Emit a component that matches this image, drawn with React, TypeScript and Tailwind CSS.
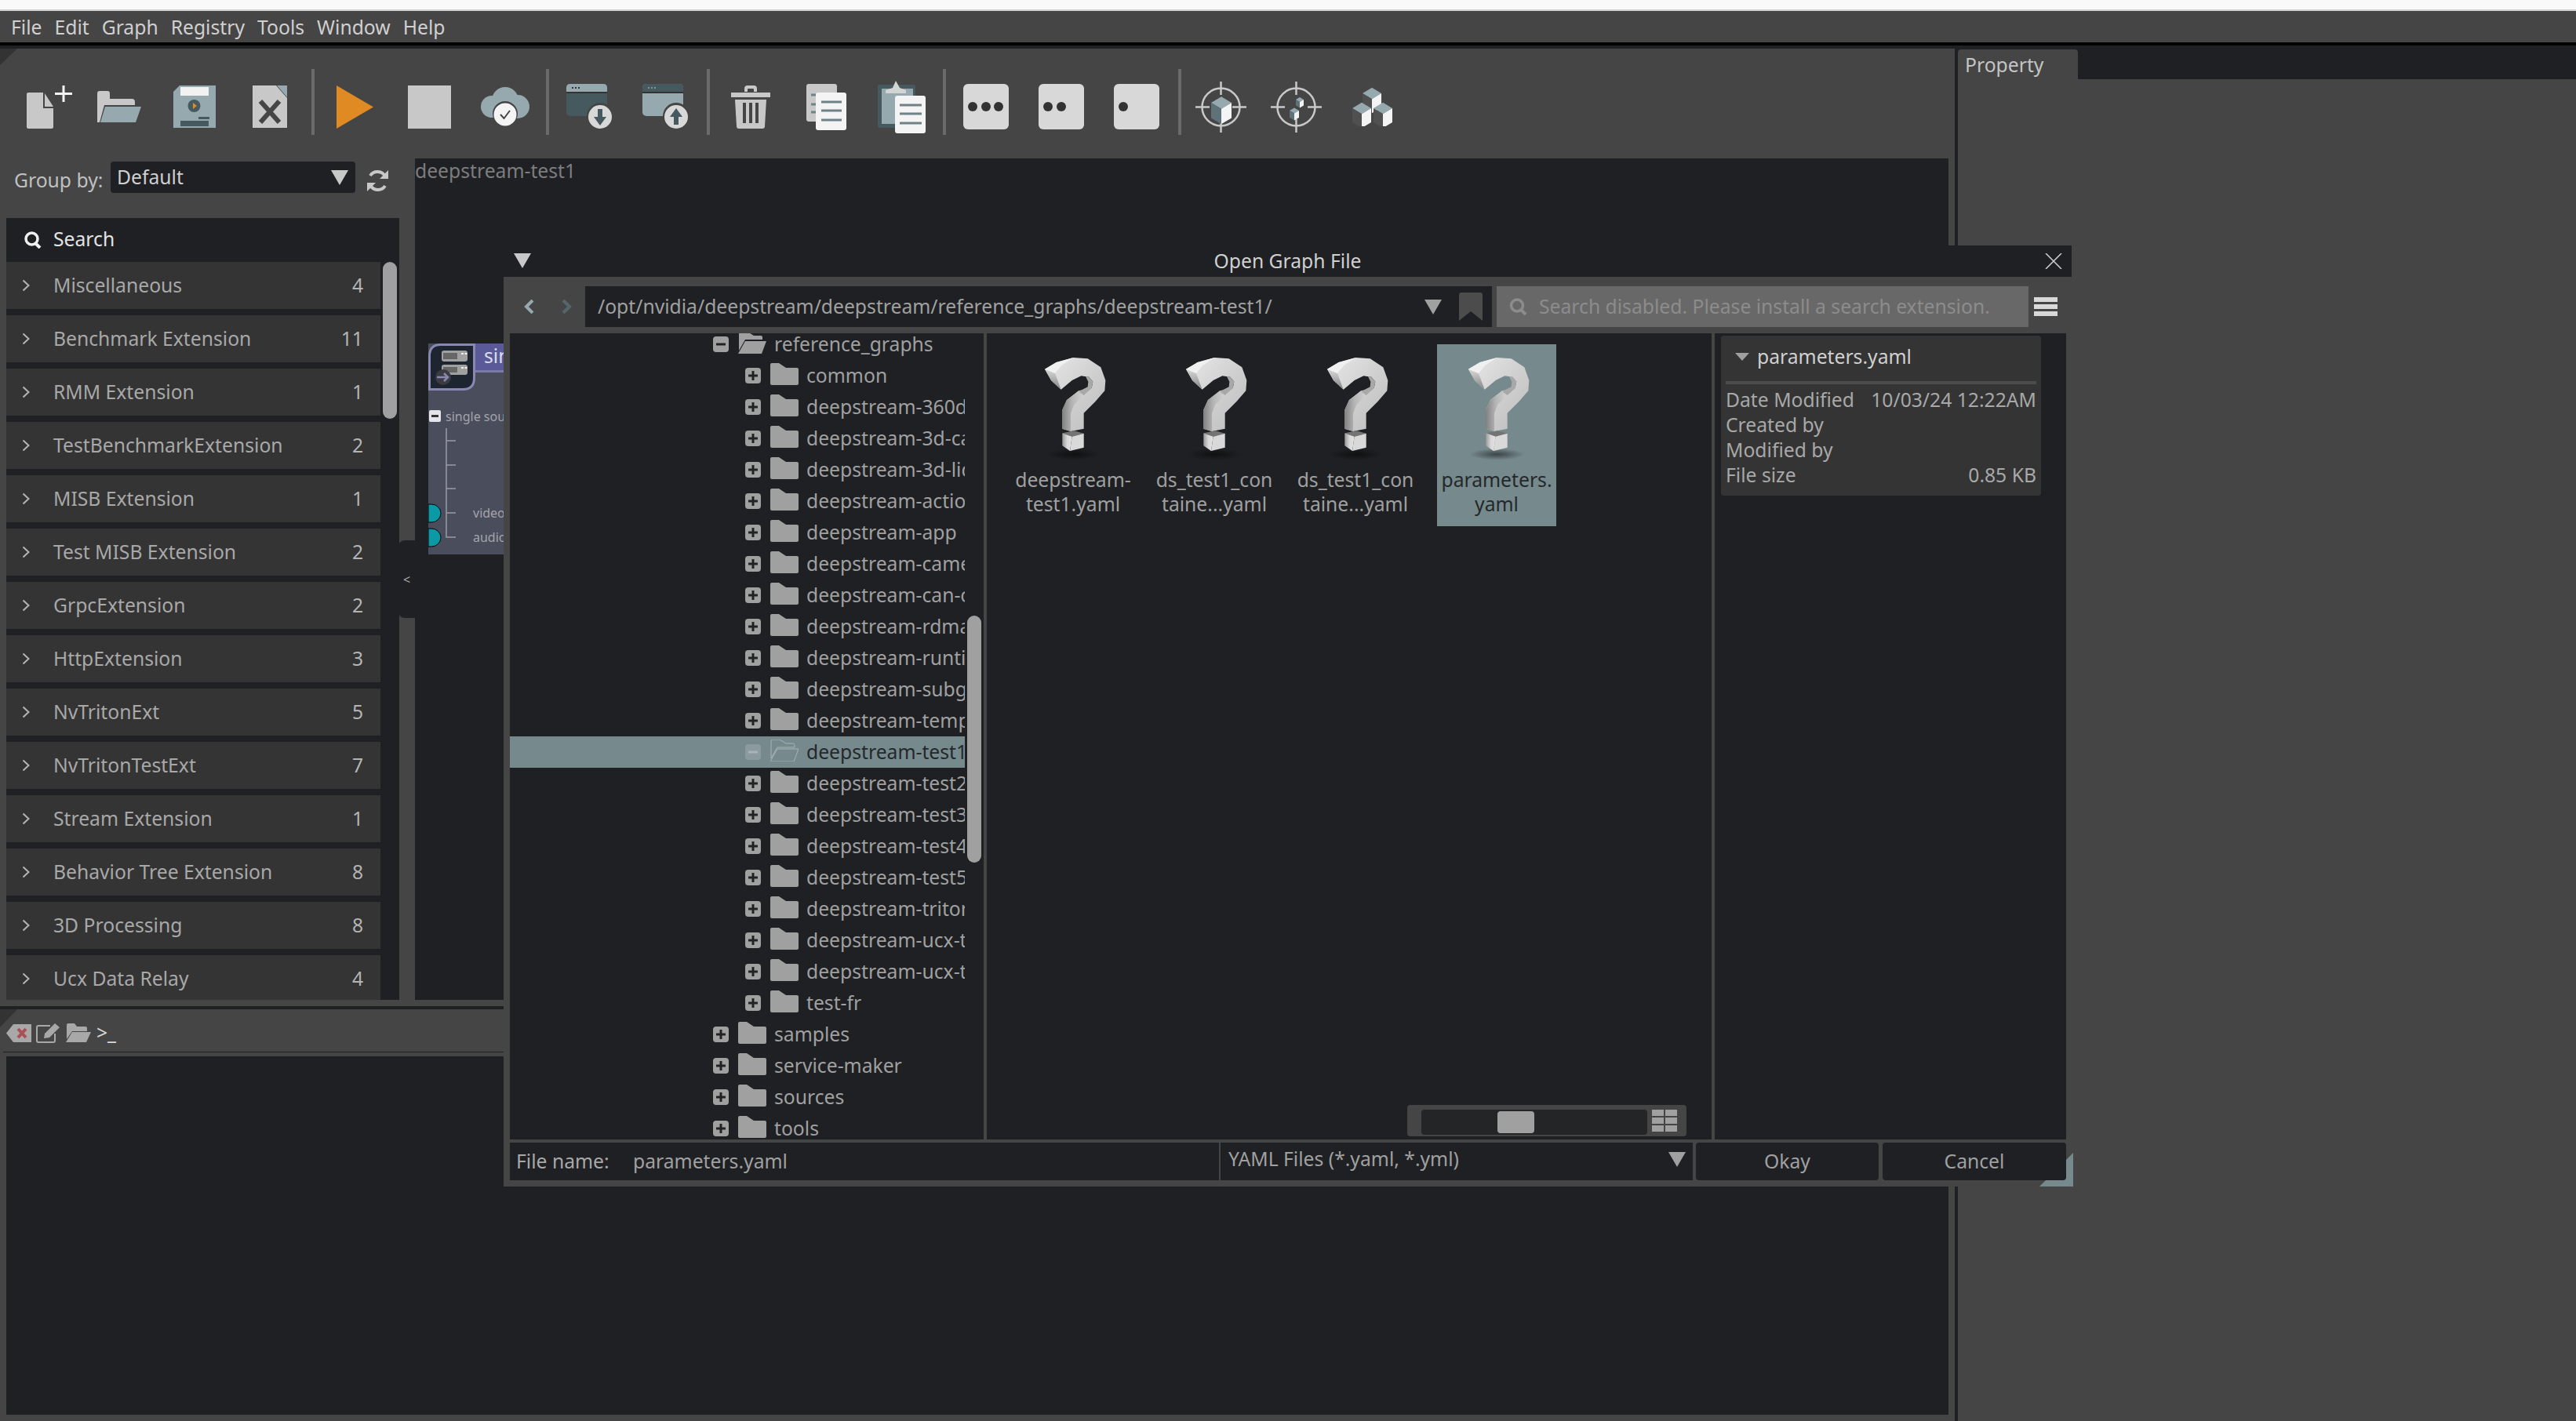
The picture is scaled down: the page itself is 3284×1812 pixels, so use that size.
const categories: [string, number][] = [
  ["Miscellaneous", 4],
  ["Benchmark Extension", 11],
  ["RMM Extension", 1],
  ["TestBenchmarkExtension", 2],
  ["MISB Extension", 1],
  ["Test MISB Extension", 2],
  ["GrpcExtension", 2],
  ["HttpExtension", 3],
  ["NvTritonExt", 5],
  ["NvTritonTestExt", 7],
  ["Stream Extension", 1],
  ["Behavior Tree Extension", 8],
  ["3D Processing", 8],
  ["Ucx Data Relay", 4],
];

const graphDirs = [
  "common",
  "deepstream-360d",
  "deepstream-3d-cam",
  "deepstream-3d-lid",
  "deepstream-action",
  "deepstream-app",
  "deepstream-camer",
  "deepstream-can-or",
  "deepstream-rdma-",
  "deepstream-runtim",
  "deepstream-subgra",
  "deepstream-templa",
  "deepstream-test1",
  "deepstream-test2",
  "deepstream-test3",
  "deepstream-test4",
  "deepstream-test5",
  "deepstream-triton",
  "deepstream-ucx-te",
  "deepstream-ucx-te",
  "test-fr",
];

const files = [
  ["deepstream-", "test1.yaml"],
  ["ds_test1_con", "taine...yaml"],
  ["ds_test1_con", "taine...yaml"],
  ["parameters.", "yaml"],
];

const Chevron = () => (
  <svg width="10" height="16" viewBox="0 0 10 16" className="shrink-0">
    <path d="M1.5 1.5 8.5 8l-7 6.5" fill="none" stroke="#b4b4b4" strokeWidth="2" />
  </svg>
);

const Tri = ({ className, fill = "#c8c8c8" }: { className?: string; fill?: string }) => (
  <svg width="22" height="19" viewBox="0 0 22 19" className={className}>
    <path d="M0 0h22L11 19z" fill={fill} />
  </svg>
);

const Sep = ({ className }: { className: string }) => (
  <div className={`w-1 h-[84px] mb-3 shrink-0 bg-[#6a6a6a] ${className}`} />
);

const Cube = ({ x, y, s, left = "#5e7278" }: { x: number; y: number; s: number; left?: string }) => (
  <g>
    <polygon points={`${x},${y - s * 0.6} ${x + s},${y} ${x},${y + s * 0.6} ${x - s},${y}`} fill="#95a9af" />
    <polygon points={`${x - s},${y} ${x},${y + s * 0.6} ${x},${y + s * 2.1} ${x - s},${y + s * 1.5}`} fill={left} />
    <polygon points={`${x + s},${y} ${x},${y + s * 0.6} ${x},${y + s * 2.1} ${x + s},${y + s * 1.5}`} fill="#f4f4f4" />
  </g>
);

const TargetIcon = ({ className, children }: { className: string; children: React.ReactNode }) => (
  <svg width="65" height="65" viewBox="0 0 65 65" className={`shrink-0 ${className}`}>
    <circle cx="32.5" cy="32.5" r="24" fill="none" stroke="#c8c8c8" strokeWidth="2.5" />
    <path d="M32.5 0v17M32.5 48v17M0 32.5h18M47 32.5h18" stroke="#c8c8c8" strokeWidth="2.5" />
    {children}
  </svg>
);

const Dots = ({ className, xs }: { className: string; xs: number[] }) => (
  <svg width="58" height="58" viewBox="0 0 58 58" className={`shrink-0 ${className}`}>
    <rect width="58" height="58" rx="6" fill="#d8d8d8" />
    {xs.map((x) => (
      <circle key={x} cx={x} cy="29" r="6" fill="#333" />
    ))}
  </svg>
);

const Window = ({ className, up }: { className: string; up?: boolean }) => (
  <svg width="59" height="58" viewBox="0 0 59 58" className={`shrink-0 ${className}`}>
    <rect width="52" height="41" rx="5" fill={up ? "#95a9af" : "#46595f"} />
    <path d="M0 10V5q0-5 5-5h42q5 0 5 5v5z" fill={up ? "#46595f" : "#95a9af"} />
    <rect y="10" width="52" height="2" fill="#333" />
    <path d="M7 5h2M11 5h2M15 5h2" stroke={up ? "#7d9197" : "#333"} strokeWidth="2" />
    <circle cx="43" cy="41" r="17" fill="#454545" />
    <circle cx="43" cy="42" r="15" fill="#d8d8d8" />
    {up ? (
      <path d="M43 31l8 11h-5v10h-6V42h-5z" fill="#46595f" />
    ) : (
      <path d="M43 53l8-11h-5V32h-6v10h-5z" fill="#46595f" />
    )}
  </svg>
);

const Plus = () => (
  <svg width="20" height="20" viewBox="0 0 20 20" className="shrink-0">
    <rect width="20" height="20" rx="4" fill="#a0a0a0" />
    <path d="M10 4v12M4 10h12" stroke="#222" strokeWidth="3" />
  </svg>
);

const Minus = ({ fill = "#a0a0a0", bar = "#222" }: { fill?: string; bar?: string }) => (
  <svg width="20" height="20" viewBox="0 0 20 20" className="shrink-0">
    <rect width="20" height="20" rx="4" fill={fill} />
    <path d="M4 10h12" stroke={bar} strokeWidth="3" />
  </svg>
);

const Folder = () => (
  <svg width="36" height="28" viewBox="0 0 36 28" className="shrink-0 -mt-1">
    <path d="M0 2q0-2 2-2h9l9 6h14q2 0 2 2v18q0 2-2 2H2q-2 0-2-2z" fill="#a0a0a0" />
  </svg>
);

const FolderOpen = ({ fill = "#a0a0a0", line = "none" }: { fill?: string; line?: string }) => (
  <svg width="36" height="28" viewBox="0 0 36 28" className="shrink-0 -mt-1">
    <path d="M1 24V2q0-2 2-2h9l8 5h9q2 0 2 2v3H9z" fill={fill} stroke={line} />
    <path d="M9 12h27l-6 16H0z" fill={fill} stroke={line} />
  </svg>
);

const Question = () => (
  <svg width="130" height="160" viewBox="0 0 390 480" className="shrink-0">
    <defs>
      <linearGradient id="qface" x1="0" y1="0" x2="1" y2="1">
        <stop offset="0" stopColor="#e8e8e8" />
        <stop offset="0.5" stopColor="#d0d0d0" />
        <stop offset="1" stopColor="#bcbcbc" />
      </linearGradient>
      <linearGradient id="qstem" x1="0" y1="0" x2="1" y2="0">
        <stop offset="0" stopColor="#808080" />
        <stop offset="0.45" stopColor="#b4b4b4" />
        <stop offset="1" stopColor="#d2d2d2" />
      </linearGradient>
      <linearGradient id="qhook" x1="0" y1="0" x2="0" y2="1">
        <stop offset="0" stopColor="#d8d8d8" />
        <stop offset="1" stopColor="#858585" />
      </linearGradient>
      <linearGradient id="qdot" x1="0" y1="0" x2="1" y2="0">
        <stop offset="0" stopColor="#9a9a9a" />
        <stop offset="0.5" stopColor="#d8d8d8" />
        <stop offset="1" stopColor="#e4e4e4" />
      </linearGradient>
      <radialGradient id="qshadow">
        <stop offset="0" stopColor="#000" stopOpacity="0.5" />
        <stop offset="1" stopColor="#000" stopOpacity="0" />
      </radialGradient>
    </defs>
    <ellipse cx="175" cy="418" rx="105" ry="22" fill="url(#qshadow)" />
    <path d="M66 92 110 66 175 48 230 52 280 85 298 135 295 175 260 215 215 260 215 320 165 330 132 320 132 250 150 210 195 175 245 165 250 140 235 122 205 118 170 135 128 170 90 135z" fill="url(#qface)" />
    <path d="M132 320V250L150 210 195 178 215 192 178 228 165 262V330z" fill="url(#qstem)" />
    <path d="M235 122 250 140 245 165 215 192 195 178 230 160 232 140 222 120z" fill="#a8a8a8" />
    <path d="M66 92 105 108 128 170 90 135z" fill="url(#qhook)" />
    <path d="M66 92 110 66 175 48 130 78 105 108z" fill="#f0f0f0" />
    <path d="M133 337 178 328 215 338 170 350z" fill="#747474" />
    <path d="M133 337 170 350 162 405 133 385z" fill="url(#qdot)" />
    <path d="M170 350 215 338 215 392 162 405z" fill="#d9d9d9" />
  </svg>
);

const App = () => {
  return (
    <div className="relative w-[3284px] h-[1812px] overflow-hidden flex flex-col bg-[#454545] font-['Noto_Sans',sans-serif] text-[24.7px] leading-8">
      <div className="h-3 bg-[#f9f9f9]" />
      <div className="h-0.5 bg-[#d0d0d0]" />
      <div className="h-10 flex items-center pl-3.5 pt-0.5 gap-[16px] text-[#d0d0d0]">
        <span>File</span>
        <span>Edit</span>
        <span>Graph</span>
        <span>Registry</span>
        <span>Tools</span>
        <span>Window</span>
        <span>Help</span>
      </div>
      <div className="h-1 bg-black" />

      <div className="flex flex-1 min-h-0">
        <div className="w-[2492px] flex flex-col">
          <div className="h-1 bg-[#1f2023]" />

          {/* main toolbar */}
          <div className="relative h-[140px] flex items-center pt-2">
            <svg width="22" height="21" viewBox="0 0 22 21" className="absolute left-0 top-0">
              <path d="M0 0h22L0 21z" fill="#333" />
            </svg>
            <svg width="58" height="55" viewBox="0 0 58 55" className="ml-[34px] shrink-0">
              <path d="M0 11q0-2 2-2h19v20h13v24q0 2-2 2H2q-2 0-2-2z" fill="#c8c8c8" />
              <path d="M23 10v17h11z" fill="#c8c8c8" />
              <path d="M47 0v21M36 10.5h22" stroke="#f4f4f4" strokeWidth="3" />
            </svg>
            <svg width="56" height="40" viewBox="0 0 56 40" className="ml-8 shrink-0">
              <path d="M0 3q0-3 3-3h10q3 0 3 3v7h28q4 0 4 4v4H9L3 40H0z" fill="#c8c8c8" />
              <path d="M10 20h46l-7 20H4z" fill="#95a9af" />
            </svg>
            <svg width="54" height="54" viewBox="0 0 54 54" className="ml-[41px] shrink-0">
              <path d="M8 0h46v54H0V8z" fill="#95a9af" />
              <rect x="9" y="2" width="36" height="11" fill="#f2f2f2" />
              <circle cx="26.5" cy="26" r="8" fill="#46595f" />
              <path d="M25 22l5 4-5 4z" fill="#e08a23" />
              <rect x="32" y="40" width="14" height="3" fill="#46595f" />
              <rect x="9" y="45" width="36" height="7" fill="#46595f" />
            </svg>
            <svg width="44" height="54" viewBox="0 0 44 54" className="ml-[47px] shrink-0">
              <path d="M0 0h30l14 16v38H0z" fill="#c8c8c8" />
              <path d="M31 0h13v15z" fill="#95a9af" />
              <path d="M10 20l24 27M34 20 10 47" stroke="#454545" strokeWidth="6" />
            </svg>
            <Sep className="ml-[31px]" />
            <svg width="47" height="55" viewBox="0 0 47 55" className="ml-7 shrink-0">
              <path d="M0 0l47 27.5L0 55z" fill="#e08a23" />
            </svg>
            <div className="ml-11 w-[55px] h-[55px] shrink-0 bg-[#c8c8c8]" />
            <svg width="62" height="50" viewBox="0 0 62 50" className="ml-[38px] shrink-0">
              <circle cx="14" cy="25" r="14" fill="#95a9af" />
              <circle cx="31" cy="17" r="17" fill="#95a9af" />
              <circle cx="47" cy="25" r="15" fill="#95a9af" />
              <rect x="12" y="24" width="38" height="15" fill="#95a9af" />
              <circle cx="31" cy="34" r="16" fill="#454545" />
              <circle cx="31" cy="35" r="14.5" fill="#f4f4f4" />
              <path d="M25 35l4.5 5L37 30" fill="none" stroke="#454545" strokeWidth="2" />
            </svg>
            <Sep className="ml-[21px]" />
            <Window className="ml-[22px]" />
            <Window className="ml-[38px]" up />
            <Sep className="ml-[23px]" />
            <svg width="50" height="55" viewBox="0 0 50 55" className="ml-[27px] shrink-0">
              <path d="M17 8V4q0-4 4-4h8q4 0 4 4v4h-4V5q0-1-1-1h-6q-1 0-1 1v3z" fill="#c8c8c8" />
              <path d="M0 9h50v6H0z" fill="#c8c8c8" />
              <path d="M5 18h40l-2 34q0 3-3 3H10q-3 0-3-3z" fill="#c8c8c8" />
              <path d="M15 22h4v26h-4zM23 22h4v26h-4zM31 22h4v26h-4z" fill="#454545" />
            </svg>
            <svg width="51" height="59" viewBox="0 0 51 59" className="ml-[46px] shrink-0">
              <rect width="39" height="48" rx="3" fill="#c8c8c8" />
              <path d="M6 14h6M6 26h6M6 36h6" stroke="#6f8288" strokeWidth="3" />
              <rect x="12" y="11" width="39" height="48" rx="3" fill="#f4f4f4" />
              <path d="M19 23h26M19 34h26M19 46h26" stroke="#6f8288" strokeWidth="3" />
            </svg>
            <svg width="61" height="67" viewBox="0 0 61 67" className="ml-10 shrink-0">
              <rect y="5" width="48" height="55" rx="2" fill="#46595f" />
              <rect x="5" y="10" width="40" height="45" fill="#95a9af" />
              <path d="M10 12l9-3 4-9 5 9 8 3v4H10z" fill="#d4d4d4" />
              <rect x="22" y="19" width="39" height="48" rx="3" fill="#f4f4f4" />
              <path d="M28 31h28M28 42h28M28 54h28" stroke="#6f8288" strokeWidth="3" />
            </svg>
            <Sep className="ml-[22px]" />
            <Dots className="ml-[22px]" xs={[12, 29, 45]} />
            <Dots className="ml-[38px]" xs={[12, 29]} />
            <Dots className="ml-[38px]" xs={[12]} />
            <Sep className="ml-6" />
            <TargetIcon className="ml-[18px]">
              <Cube x={33} y={27} s={13} />
            </TargetIcon>
            <TargetIcon className="ml-[31px]">
              <Cube x={37} y={23} s={5} />
              <Cube x={30} y={37} s={6} />
            </TargetIcon>
            <svg width="53" height="50" viewBox="0 0 53 50" className="ml-[38px] shrink-0">
              <Cube x={26} y={8} s={12} left="#505050" />
              <Cube x={13} y={27} s={12} left="#505050" />
              <Cube x={40} y={27} s={12} left="#505050" />
            </svg>
          </div>

          <div className="h-[1073px] flex">
            {/* component list */}
            <div className="relative w-[529px] flex flex-col">
              <div className="h-[76px] flex items-start pt-1 pl-[18px]">
                <span className="mt-2 w-[123px] text-[#c0c0c0] whitespace-nowrap">Group by:</span>
                <div className="w-[312px] h-10 flex items-center rounded bg-[#1f2023]">
                  <span className="ml-2 w-[264px] text-[#cfcfcf]">Default</span>
                  <div className="w-10 h-10 flex items-center justify-center">
                    <Tri />
                  </div>
                </div>
                <svg width="29" height="29" viewBox="0 0 29 29" className="ml-3.5 mt-2.5">
                  <path d="M24 9A11 11 0 0 0 5 8" fill="none" stroke="#c8c8c8" strokeWidth="4" />
                  <path d="M28 1v11H17z" fill="#c8c8c8" />
                  <path d="M5 20a11 11 0 0 0 19 1" fill="none" stroke="#c8c8c8" strokeWidth="4" />
                  <path d="M1 28V17h11z" fill="#c8c8c8" />
                </svg>
              </div>
              <div className="ml-2 w-[501px] h-14 shrink-0 flex items-center bg-[#1f2023] text-[#e4e4e4]">
                <svg width="23" height="22" viewBox="0 0 23 22" className="ml-[23px]">
                  <circle cx="9.5" cy="9.5" r="7.5" fill="none" stroke="#f0f0f0" strokeWidth="3.5" />
                  <path d="M14 15l6 6" stroke="#f0f0f0" strokeWidth="4" />
                </svg>
                <span className="ml-3.5 -mt-0.5">Search</span>
              </div>
              <div className="ml-2 w-[501px] h-[941px] flex overflow-hidden bg-[#1f2023]">
                <div className="w-[477px] flex flex-col gap-2 shrink-0">
                  {categories.map(([name, count]) => (
                    <div key={name} className="h-[60px] shrink-0 flex items-center pl-5 pr-[22px] bg-[#343434] text-[#a8a8a8]">
                      <Chevron />
                      <span className="ml-[30px] flex-1">{name}</span>
                      <span className="text-[#b4b4b4]">{count}</span>
                    </div>
                  ))}
                </div>
                <div className="ml-[3px] w-[18px] h-[200px] rounded-full bg-[#a0a0a0]" />
              </div>
              <div className="absolute right-0 top-[487px] w-[21px] h-[99px] flex items-center justify-center rounded-l-lg bg-[#1f2023] text-base text-[#aaaaaa]">
                &lt;
              </div>
            </div>

            {/* graph canvas */}
            <div className="relative w-[1955px] bg-[#1f2023] text-[#7d7d7d]">
              <span className="block">deepstream-test1</span>
              <div className="absolute left-[17px] top-[236px] w-[200px] h-[269px] bg-[#4a4d5b]">
                <div className="absolute left-[60px] top-0 right-0 h-[37px] pl-[11px] border-b-[3px] border-[#7c7aa8] bg-[#5a5a98] text-[#dcdcec] whitespace-nowrap overflow-hidden">
                  single source
                </div>
                <svg width="60" height="60" viewBox="0 0 60 60" className="absolute left-0 top-0">
                  <path d="M1.5 16Q1.5 1.5 16 1.5H58.5V44Q58.5 58.5 44 58.5H1.5z" fill="#1c2530" stroke="#8a88b0" strokeWidth="3" />
                  <rect x="17" y="9" width="33" height="14" rx="3" fill="#a0a0a0" />
                  <rect x="19" y="12" width="18" height="8" fill="#666" />
                  <path d="M42 13h3M46.5 13h3" stroke="#eee" strokeWidth="2" />
                  <rect x="17" y="27" width="33" height="13" rx="3" fill="#a0a0a0" />
                  <rect x="19" y="30" width="18" height="7" fill="#666" />
                  <path d="M42 31h3M46.5 31h3" stroke="#eee" strokeWidth="2" />
                  <circle cx="19" cy="43" r="10" fill="#3b3b40" />
                  <path d="M11 43h13M20 38l5 5-5 5" fill="none" stroke="#8a88b0" strokeWidth="2.5" />
                </svg>
                <svg width="36" height="190" viewBox="0 0 36 190" className="absolute left-0 top-[85px]">
                  <rect x="1" width="15" height="15" rx="2" fill="#e4e4ea" />
                  <path d="M4 7.5h9" stroke="#333" strokeWidth="3" />
                  <path d="M23 23v139h12M23 39h12M23 70h12M23 100h12M23 131h12" fill="none" stroke="#9a9aa2" strokeWidth="1.5" />
                  <path d="M0 120h4a12 11.5 0 0 1 0 23H0z" fill="#0b9aa5" stroke="#000" strokeWidth="1" />
                  <path d="M0 151h4a12 11.5 0 0 1 0 23H0z" fill="#0b9aa5" stroke="#000" strokeWidth="1" />
                </svg>
                <span className="absolute left-[22px] top-[81px] text-base leading-6 whitespace-nowrap text-[#a4a4ac]">single source</span>
                <span className="absolute left-[57px] top-[204px] text-base leading-6 text-[#a4a4ac]">video</span>
                <span className="absolute left-[57px] top-[235px] text-base leading-6 text-[#a4a4ac]">audio</span>
              </div>
            </div>
          </div>

          <div className="h-2" />
          <div className="h-1 bg-[#1f2023]" />

          {/* console */}
          <div className="relative h-[54px] flex items-center pl-2 pt-1.5 text-[#d8d8d8]">
            <svg width="22" height="23" viewBox="0 0 22 23" className="absolute left-0 top-0">
              <path d="M0 0h22L0 23z" fill="#333" />
            </svg>
            <svg width="32" height="23" viewBox="0 0 32 23" className="shrink-0">
              <path d="M9 0h23v23H9L0 11.5z" fill="#a8a8a8" />
              <path d="M15 6l10 11M25 6 15 17" stroke="#a94f55" strokeWidth="4" />
            </svg>
            <svg width="32" height="26" viewBox="0 0 32 26" className="ml-1.5 shrink-0">
              <path d="M24 14v9q0 2-2 2H3q-2 0-2-2V6q0-2 2-2h15" fill="none" stroke="#a8a8a8" strokeWidth="2" />
              <path d="M10 20l1-6L24 1l6 5-13 13z" fill="#a8a8a8" />
            </svg>
            <svg width="32" height="24" viewBox="0 0 32 24" className="ml-1.5 shrink-0">
              <path d="M1 20V2q0-2 2-2h8l3 4h11q2 0 2 2v4H8z" fill="#a8a8a8" />
              <path d="M8 11h24l-6 13H0z" fill="#a8a8a8" />
            </svg>
            <span className="ml-[7px]">&gt;_</span>
          </div>
          <div className="ml-1 mr-2 h-px bg-[#1f2023]" />
          <div className="h-[5px]" />
          <div className="ml-2 mr-2 flex-1 bg-[#1f2023]" />
          <div className="h-2" />
        </div>

        <div className="w-1 bg-[#1f2023]" />

        {/* property panel */}
        <div className="flex-1 flex flex-col">
          <div className="h-[43px] flex items-end bg-[#1f2023]">
            <div className="w-[153px] h-[38px] pl-[9px] pt-1 rounded-t bg-[#454545] text-[#c4c4c4]">Property</div>
          </div>
        </div>
      </div>

      {/* file dialog */}
      <div className="absolute left-[642px] top-[313px] w-[2001px] h-[1200px] flex flex-col bg-[#454545]">
        <svg width="43" height="43" viewBox="0 0 43 43" className="absolute right-0 bottom-0">
          <path d="M43 0v43H0z" fill="#76898d" />
        </svg>
        <div className="relative h-10 mr-0.5 flex items-center justify-center bg-[#1f2023] text-[#d0d0d0]">
          <Tri className="absolute left-[13px] top-[10px]" />
          <span>Open Graph File</span>
          <svg width="22" height="20" viewBox="0 0 22 20" className="absolute right-3 top-2.5">
            <path d="M1 0l20 20M21 0 1 20" stroke="#d0d0d0" strokeWidth="1.5" />
          </svg>
        </div>

        <div className="relative mt-3 h-[52px] flex">
          <div className="w-[104px] flex items-center">
            <svg width="15" height="18" viewBox="0 0 15 18" className="ml-[25px]">
              <path d="M12 1 4 9l8 8" fill="none" stroke="#95a9af" strokeWidth="4" />
            </svg>
            <svg width="15" height="18" viewBox="0 0 15 18" className="ml-[33px]">
              <path d="m3 1 8 8-8 8" fill="none" stroke="#55666b" strokeWidth="4" />
            </svg>
          </div>
          <div className="w-[1156px] flex items-center bg-[#1f2023] text-[#a0a0a0]">
            <span className="ml-4 w-[1054px] whitespace-nowrap">/opt/nvidia/deepstream/deepstream/reference_graphs/deepstream-test1/</span>
            <Tri fill="#a0a0a0" />
            <svg width="30" height="36" viewBox="0 0 30 36" className="ml-[22px]">
              <path d="M3 0h24q3 0 3 3v33L15 24 0 36V3q0-3 3-3z" fill="#4c4c4c" />
            </svg>
          </div>
          <div className="ml-1.5 w-[678px] flex items-center bg-[#686868] text-[#8c8c8c]">
            <svg width="24" height="22" viewBox="0 0 24 22" className="ml-4">
              <circle cx="10" cy="9.5" r="7.5" fill="none" stroke="#8c8c8c" strokeWidth="3.5" />
              <path d="M15 15l6 6" stroke="#8c8c8c" strokeWidth="4" />
            </svg>
            <span className="ml-3.5 whitespace-nowrap">Search disabled. Please install a search extension.</span>
          </div>
          <div className="ml-[7px] w-[30px] flex flex-col justify-center gap-[3px]">
            <div className="h-1.5 bg-[#d8d8d8]" />
            <div className="h-1.5 bg-[#d8d8d8]" />
            <div className="h-1.5 bg-[#d8d8d8]" />
          </div>
        </div>

        <div className="relative mt-2 ml-2 mr-[9px] h-[1028px] flex">
          {/* folder tree */}
          <div className="w-[604px] flex overflow-hidden bg-[#1f2023] text-[#a0a0a0]">
            <div className="w-[580px] shrink-0 -mt-1.5 whitespace-nowrap">
              <div className="h-10 flex items-center gap-3 pl-[259px]">
                <Minus />
                <FolderOpen />
                <span className="-ml-0.5">reference_graphs</span>
              </div>
              {graphDirs.map((dir, i) =>
                dir === "deepstream-test1" ? (
                  <div key={i} className="h-10 flex items-center gap-3 pl-[300px] overflow-hidden bg-[#76898d] text-[#24282a]">
                    <Minus fill="#8a9a9e" bar="#a8b4b6" />
                    <FolderOpen fill="#76898d" line="#a8b4b6" />
                    <span className="-ml-0.5">{dir}</span>
                  </div>
                ) : (
                  <div key={i} className="h-10 flex items-center gap-3 pl-[300px] overflow-hidden">
                    <Plus />
                    <Folder />
                    <span className="-ml-0.5">{dir}</span>
                  </div>
                )
              )}
              {["samples", "service-maker", "sources", "tools"].map((dir) => (
                <div key={dir} className="h-10 flex items-center gap-3 pl-[259px]">
                  <Plus />
                  <Folder />
                  <span className="-ml-0.5">{dir}</span>
                </div>
              ))}
            </div>
            <div className="mt-[360px] ml-[3px] w-[18px] h-[315px] rounded-full bg-[#a0a0a0]" />
          </div>

          <div className="w-1 bg-[#454545]" />

          {/* file tiles */}
          <div className="relative w-[924px] flex items-start gap-7 pt-3.5 pl-[34px] bg-[#1f2023] text-[#a0a0a0]">
            {files.map(([a, b], i) => (
              <div key={i} className={`w-[152px] h-[232px] pl-[18px] pt-px ${i === 3 ? "bg-[#76898d] text-[#24282a]" : ""}`}>
                <Question />
                <div className="-ml-[18px] -mt-1 text-center whitespace-nowrap leading-[31px]">
                  <div>{a}</div>
                  <div>{b}</div>
                </div>
              </div>
            ))}
            <div className="absolute right-8 bottom-1 w-[356px] h-10 flex pl-[18px] pt-1.5 rounded bg-[#454545]">
              <div className="w-[288px] h-8 pt-0.5 rounded bg-[#242527]">
                <div className="ml-[97px] w-[47px] h-7 rounded bg-[#a0a0a0]" />
              </div>
              <div className="ml-1.5 w-8 grid grid-cols-2 gap-0.5 h-7">
                <div className="bg-[#a0a0a0]" />
                <div className="bg-[#a0a0a0]" />
                <div className="bg-[#a0a0a0]" />
                <div className="bg-[#a0a0a0]" />
                <div className="bg-[#a0a0a0]" />
                <div className="bg-[#a0a0a0]" />
              </div>
            </div>
          </div>

          <div className="w-1 bg-[#454545]" />

          {/* details */}
          <div className="w-[448px] pt-[3px] pl-2 bg-[#1f2023]">
            <div className="w-[408px] h-[204px] pt-2.5 px-1.5 rounded bg-[#343434] text-[#a8a8a8]">
              <div className="h-12 flex items-start pl-3 text-[#d0d0d0]">
                <svg width="18" height="10" viewBox="0 0 18 10" className="mt-3">
                  <path d="M0 0h18L9 10z" fill="#a0a0a0" />
                </svg>
                <span className="ml-[10px] leading-[38px] -mt-0.5">parameters.yaml</span>
              </div>
              <div className="h-1 bg-[#4c4c4c]" />
              <div className="mt-1 flex justify-between whitespace-nowrap">
                <span>Date Modified</span>
                <span>10/03/24 12:22AM</span>
              </div>
              <div>Created by</div>
              <div>Modified by</div>
              <div className="flex justify-between">
                <span>File size</span>
                <span>0.85 KB</span>
              </div>
            </div>
          </div>
        </div>

        {/* file name row */}
        <div className="relative mt-1 ml-2 h-12 flex text-[#a0a0a0]">
          <div className="w-[904px] flex items-center bg-[#1f2023]">
            <span className="ml-2 w-[149px] text-[#a8a8a8]">File name:</span>
            <span>parameters.yaml</span>
          </div>
          <div className="ml-0.5 w-[602px] flex items-center bg-[#1f2023]">
            <span className="ml-2.5 w-[561px] -mt-1.5">YAML Files (*.yaml, *.yml)</span>
            <Tri fill="#a0a0a0" className="-mt-1.5" />
          </div>
          <div className="ml-1 w-[233px] flex items-center justify-center rounded bg-[#1f2023]">Okay</div>
          <div className="ml-[5px] w-[234px] flex items-center justify-center rounded bg-[#1f2023]">Cancel</div>
        </div>
      </div>
    </div>
  );
};

export default App;
